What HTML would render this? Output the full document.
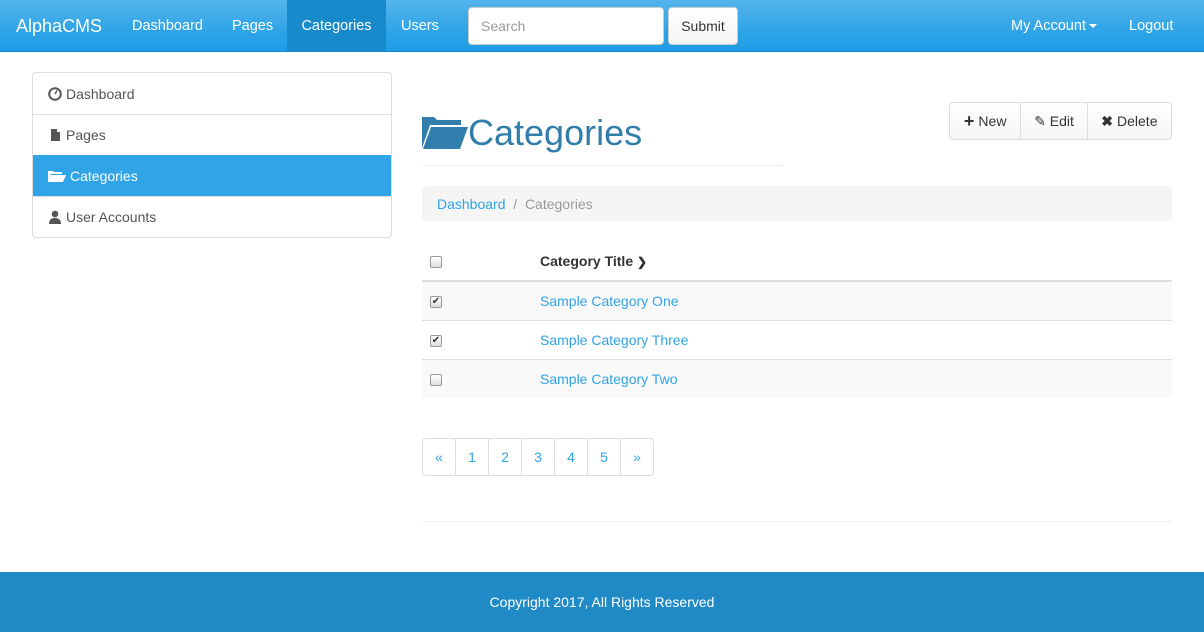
<!DOCTYPE html>
<html><head><meta charset="utf-8"><style>
*{box-sizing:border-box;margin:0;padding:0}
body{width:1204px;height:632px;font-family:"Liberation Sans",sans-serif;font-size:14px;color:#555;background:#fff;position:relative;overflow:hidden}
.nav{position:absolute;left:0;top:0;width:1204px;height:52px;background:linear-gradient(#54b4eb,#2fa4e7 60%,#1d9ce5);border-bottom:1px solid #178acc}
.nav a{position:absolute;top:0;height:51px;line-height:53px;color:#fff;font-size:14.5px;text-decoration:none;white-space:nowrap}
.brand{left:16px;font-size:18px!important}
.active{background:#178acc;width:99px;text-align:center}
.search{position:absolute;left:468px;top:7px;width:196px;height:38px;background:#fff;border:1px solid #ccc;border-radius:4px;color:#999;font-size:14px;line-height:36px;padding-left:12px}
.submit{position:absolute;left:668px;top:7px;width:70px;height:38px;background:linear-gradient(#fff,#f5f5f5);border:1px solid #ccc;border-radius:4px;color:#333;line-height:36px;text-align:center}
.caret{display:inline-block;width:0;height:0;border-left:4px solid transparent;border-right:4px solid transparent;border-top:4px solid #fff;vertical-align:middle;margin-left:3px}
.side{position:absolute;left:32px;top:72px;width:360px;border:1px solid #ddd;border-radius:4px;overflow:hidden}
.side div{height:41px;line-height:40px;padding-left:15px;border-top:1px solid #ddd;color:#555;display:flex;align-items:center;gap:4px}
.side div:first-child{border-top:none;height:41px}
.side .on{background:#2fa4e7;color:#fff;border-top-color:#2fa4e7}
h1{position:absolute;left:422px;top:112px;font-size:36px;font-weight:400;color:#317eac;display:flex;align-items:center}
.hr1{position:absolute;left:422px;top:165px;width:360px;border-top:1px solid #eee}
.btns{position:absolute;left:949px;top:102px;width:223px;height:38px;display:flex;border:1px solid #ddd;border-radius:4px;background:linear-gradient(#fff,#f5f5f5)}
.btns span{line-height:36px;color:#333;border-left:1px solid #ddd;display:flex;align-items:center;justify-content:center;gap:4px}
.btns span:first-child{border-left:none}
.bc{position:absolute;left:422px;top:186px;width:750px;height:35px;background:#f5f5f5;border-radius:4px;padding-left:15px;line-height:36px;color:#999}
.bc a{color:#2fa4e7}
table{position:absolute;left:422px;top:242px;width:750px;border-collapse:collapse}
td,th{height:39px;padding:0 8px;text-align:left;border-top:1px solid #ddd}
th{border-top:none;border-bottom:2px solid #ddd;color:#333;height:39px}
tr.s td{background:#f9f9f9}
td a{color:#2fa4e7}
.cb{width:12px;height:12px;border:1px solid #999;border-radius:2px;background:linear-gradient(#fff,#ddd);display:inline-block;vertical-align:middle;position:relative;font-size:10px;line-height:10px;text-align:center;color:#333}
.pg{position:absolute;left:422px;top:438px;display:flex;border:1px solid #ddd;border-radius:4px;height:38px}
.pg span{width:33px;text-align:center;line-height:36px;color:#2fa4e7;border-left:1px solid #ddd}
.pg span:first-child{border-left:none;width:32px}
.hr2{position:absolute;left:422px;top:521px;width:750px;border-top:1px solid #eee}
.foot{position:absolute;left:0;top:572px;width:1204px;height:60px;background:#1f8ac6;color:#fff;text-align:center;line-height:60px}
</style></head><body>
<div class="nav">
<a class="brand" style="left:16px">AlphaCMS</a>
<a style="left:132px">Dashboard</a>
<a style="left:232px">Pages</a>
<a class="active" style="left:287px">Categories</a>
<a style="left:401px">Users</a>
<div class="search">Search</div>
<div class="submit">Submit</div>
<a style="left:1011px">My Account<span class="caret"></span></a>
<a style="left:1129px">Logout</a>
</div>
<div class="side">
<div><svg width="14" height="14" viewBox="0 0 14 14"><circle cx="7" cy="7" r="5.8" fill="none" stroke="#555" stroke-width="2"/><path d="M7 7L9 3.5" stroke="#555" stroke-width="1.5"/></svg>Dashboard</div>
<div><svg width="14" height="14" viewBox="0 0 14 14"><path d="M3 1h6l3 3v9H3z" fill="#555"/><path d="M9 1v3h3" fill="#fff"/></svg>Pages</div>
<div class="on"><svg width="18" height="14" viewBox="0 0 18 14"><path d="M0 2h5l1 1h8v2H3L0 13z" fill="#fff"/><path d="M3 6h15l-3 7H0z" fill="#fff"/></svg>Categories</div>
<div><svg width="14" height="14" viewBox="0 0 14 14"><circle cx="7" cy="4" r="3.3" fill="#555"/><path d="M1 14c0-5 3-6 6-6s6 1 6 6z" fill="#555"/></svg>User Accounts</div>
</div>
<h1><svg width="46" height="34" viewBox="0 0 46 34"><path d="M0 1h12l3 3h24v5H8L0 32z" fill="#317eac"/><path d="M9 11h37l-8 22H1z" fill="#317eac"/></svg>Categories</h1>
<div class="hr1"></div>
<div class="btns"><span style="width:71px"><b style="font-size:18px">+</b>New</span><span style="width:67px">✎ Edit</span><span style="width:85px"><b>✖</b> Delete</span></div>
<div class="bc"><a>Dashboard</a> &nbsp;/&nbsp; Categories</div>
<table>
<tr><th style="width:110px"><span class="cb"></span></th><th>Category Title <span style="font-size:12px">❯</span></th></tr>
<tr class="s"><td><span class="cb">✔</span></td><td><a>Sample Category One</a></td></tr>
<tr><td><span class="cb">✔</span></td><td><a>Sample Category Three</a></td></tr>
<tr class="s"><td><span class="cb"></span></td><td><a>Sample Category Two</a></td></tr>
</table>
<div class="pg"><span>«</span><span>1</span><span>2</span><span>3</span><span>4</span><span>5</span><span>»</span></div>
<div class="hr2"></div>
<div class="foot">Copyright 2017, All Rights Reserved</div>
</body></html>
